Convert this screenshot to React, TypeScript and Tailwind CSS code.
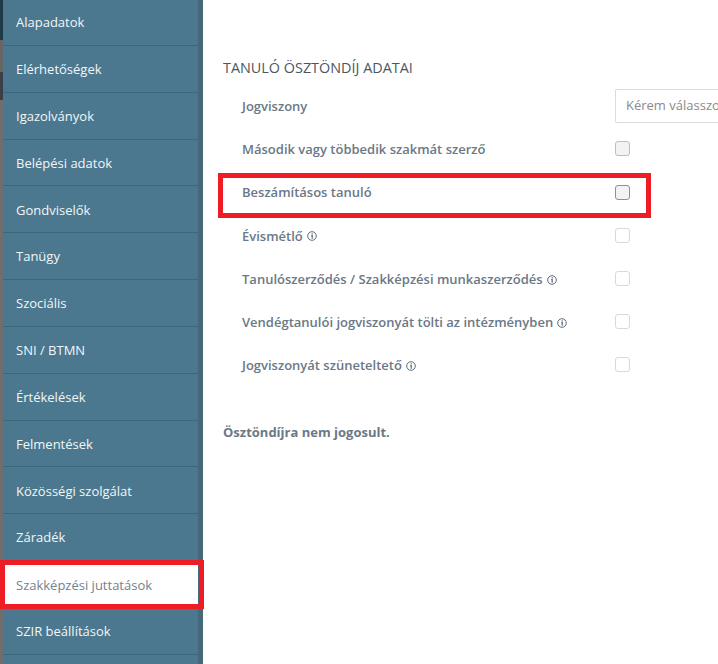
const menu = [
  "Alapadatok",
  "Elérhetőségek",
  "Igazolványok",
  "Belépési adatok",
  "Gondviselők",
  "Tanügy",
  "Szociális",
  "SNI / BTMN",
  "Értékelések",
  "Felmentések",
  "Közösségi szolgálat",
  "Záradék",
];

const fields = [
  { label: "Második vagy többedik szakmát szerző", box: "filled" },
  { label: "Beszámításos tanuló", box: "focus" },
  { label: "Évismétlő", info: true, box: "light" },
  { label: "Tanulószerződés / Szakképzési munkaszerződés", info: true, box: "light" },
  { label: "Vendégtanulói jogviszonyát tölti az intézményben", info: true, box: "light" },
  { label: "Jogviszonyát szüneteltető", info: true, box: "light" },
];

function InfoIcon() {
  return (
    <svg className="ml-[4px] h-[10px] w-[10px] shrink-0" viewBox="0 0 10 10" fill="none" stroke="#5d6b79" strokeWidth="1">
      <circle cx="5" cy="5" r="4.3" />
      <path d="M5.2 2.2v1.2M4.2 4.6H5.2V7.8" strokeWidth="1.2" />
    </svg>
  );
}

function SideItem({ label }: { label: string }) {
  return (
    <div className="flex h-[46.85px] shrink-0 items-center border-b border-[#3f6678] pt-[2px] pl-[13px] text-[13px] font-medium text-[#f2f6f8]">
      {label}
    </div>
  );
}

export default function App() {
  return (
    <div className="relative flex h-[664px] w-[718px] overflow-hidden bg-white font-['Open_Sans',sans-serif]">
      {/* page behind the modal, only a sliver shows */}
      <div className="flex w-[3px] shrink-0 flex-col bg-[#6e6e6e]">
        <div className="h-[40px] bg-[#1f3a47]" />
        <div className="h-[32px] bg-[#666666]" />
        <div className="h-[28px] bg-[#3a4048]" />
      </div>

      <aside className="flex h-full w-[200px] shrink-0 bg-[#4b788e]">
        <div className="-mt-[1px] flex w-[195px] shrink-0 flex-col">
          {menu.map((m) => (
            <SideItem key={m} label={m} />
          ))}
          <div className="flex h-[46.85px] w-[197px] shrink-0 items-center bg-white pt-[2px] pl-[13px] text-[13px] text-[#74818e]">
            Szakképzési juttatások
          </div>
          <SideItem label="SZIR beállítások" />
        </div>
        <div className="flex-1 bg-[#45687b]" />
      </aside>

      <main className="min-w-0 flex-1 pl-[20px] pt-[58px]">
        <h2 className="text-[14.4px] leading-[20px] font-medium text-[#4a5763]">TANULÓ ÖSZTÖNDÍJ ADATAI</h2>
        <div className="mt-[11px] flex h-[34px] items-center pl-[19px]">
          <span className="w-[373px] shrink-0 pt-[2px] text-[13px] font-semibold text-[#6b7885]">Jogviszony</span>
          <div className="flex h-[34px] flex-1 items-center rounded-l-[2px] border border-r-0 border-[#d5dde3] pl-[10px] text-[13px] whitespace-nowrap text-[#8a8a8a]">
            Kérem válasszon
          </div>
        </div>
        <div className="mt-[4.4px] flex flex-col">
          {fields.map((f) => (
            <div key={f.label} className="flex h-[43.2px] items-center pl-[19px]">
              <span className="flex w-[373px] shrink-0 items-center pt-[2px] text-[13px] font-semibold text-[#6b7885]">
                {f.label}
                {f.info && <InfoIcon />}
              </span>
              <span
                className={
                  f.box === "focus"
                    ? "h-[15px] w-[15px] rounded-[3px] border border-[#6a9cc0] bg-[#f3f3f3]"
                    : f.box === "light"
                      ? "h-[15px] w-[15px] rounded-[3px] border border-[#d0dbe5] bg-white"
                      : "h-[15px] w-[15px] rounded-[3px] border border-[#b4c0ca] bg-[#f3f3f3]"
                }
              />
            </div>
          ))}
        </div>
        <p className="mt-[36px] text-[13px] leading-[18px] font-bold text-[#6b7885]">Ösztöndíjra nem jogosult.</p>
      </main>

      {/* red annotation frames drawn over the screenshot */}
      <div className="absolute top-[560px] left-0 h-[49px] w-[204px] border-[5px] border-[#ee1c25]" />
      <div className="absolute top-[173px] left-[218px] h-[45px] w-[433px] border-[5px] border-[#ee1c25]" />
    </div>
  );
}
